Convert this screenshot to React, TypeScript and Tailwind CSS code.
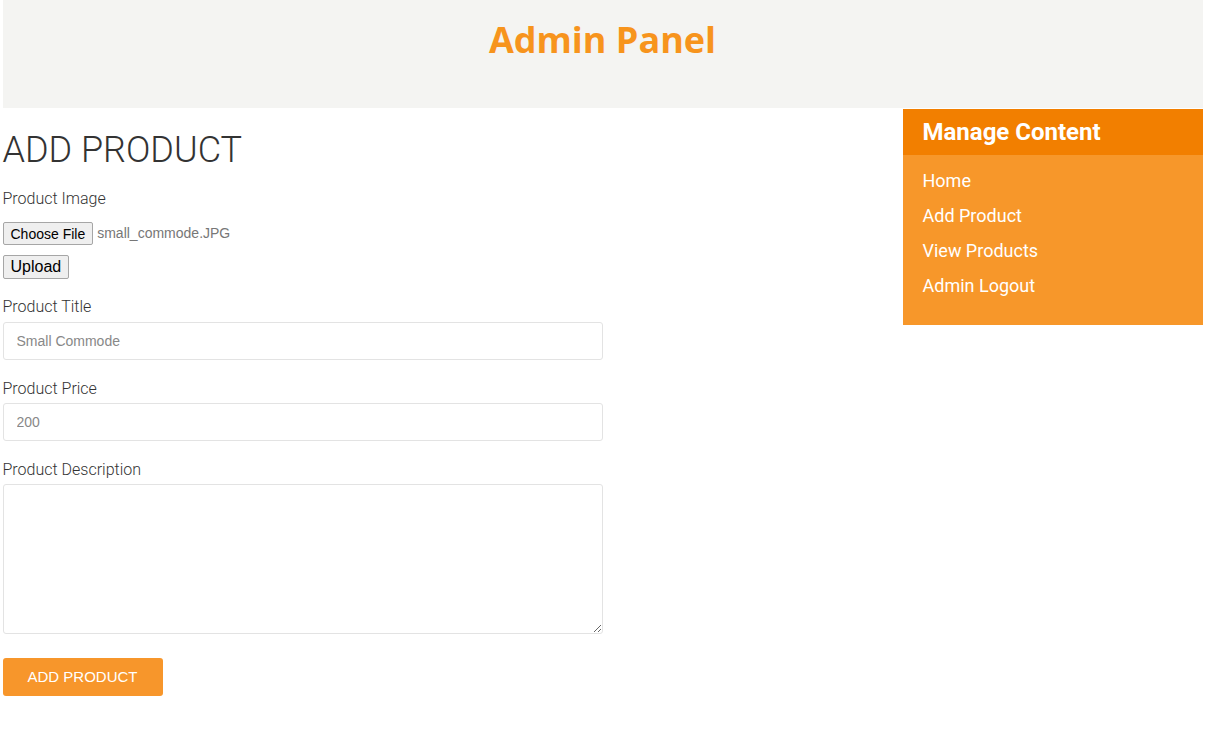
export default function App() {
  const links = ['Home', 'Add Product', 'View Products', 'Admin Logout'];

  return (
    <div className="min-h-screen bg-white">
      <div className="mx-auto w-[1200px]">
        <header className="h-[108px] bg-[#f4f4f2] pt-[13px] text-center">
          <h1 className="text-[36px] font-bold text-[#f7941d] [font-family:'Open_Sans',sans-serif]">
            Admin Panel
          </h1>
        </header>

        <div className="flex">
          <main className="w-[900px] pt-[20px] text-[#333] [font-family:Roboto,sans-serif]">
            <h2 className="text-[36px] font-light leading-[44px]">ADD PRODUCT</h2>

            <form className="mt-[16px] w-[600px]">
              <label className="block text-[16px] font-light leading-[22px]">Product Image</label>
              <div className="mt-[12px] flex items-center gap-[4px] [font-family:Arial,'Liberation_Sans',sans-serif]">
                <button type="button" className="h-[23px] rounded-[2px] border border-[#a6a6a6] bg-[#efefef] px-[7px] text-[14px] leading-[18px] text-black">
                  Choose File
                </button>
                <span className="text-[14px] text-[#777]">small_commode.JPG</span>
              </div>
              <button type="button" className="mt-[10px] h-[24px] rounded-[2px] border border-[#a6a6a6] bg-[#efefef] px-[7px] text-[16px] leading-[20px] text-black [font-family:Arial,'Liberation_Sans',sans-serif]">
                Upload
              </button>

              <label className="mt-[17px] block text-[16px] font-light leading-[22px]">Product Title</label>
              <input
                className="mt-[4px] h-[38px] w-full rounded-[3px] border border-[#e3e3e3] px-[13px] text-[14px] placeholder:text-[#888] [font-family:Arial,'Liberation_Sans',sans-serif]"
                placeholder="Small Commode"
              />

              <label className="mt-[18px] block text-[16px] font-light leading-[22px]">Product Price</label>
              <input
                className="mt-[3px] h-[38px] w-full rounded-[3px] border border-[#e3e3e3] px-[13px] text-[14px] placeholder:text-[#888] [font-family:Arial,'Liberation_Sans',sans-serif]"
                placeholder="200"
              />

              <label className="mt-[18px] block text-[16px] font-light leading-[22px]">Product Description</label>
              <textarea className="mt-[3px] block h-[150px] w-full rounded-[3px] border border-[#e3e3e3] px-[13px] py-[8px] text-[14px]" />

              <button type="button" className="mt-[24px] h-[38px] w-[160px] rounded-[3px] bg-[#f7962b] text-[15px] text-white [font-family:Arial,'Liberation_Sans',sans-serif]">
                ADD PRODUCT
              </button>
            </form>
          </main>

          <aside className="mt-[1px] w-[300px] self-start bg-[#f7972a] pb-[22px] text-white [font-family:Roboto,sans-serif]">
            <div className="h-[46px] bg-[#f27f00] px-[20px] text-[24px] font-bold leading-[46px]">
              Manage Content
            </div>
            <ul className="mt-[8px]">
              {links.map(l => (
                <li key={l} className="px-[20px] text-[18px] leading-[35px]">
                  <a href="#">{l}</a>
                </li>
              ))}
            </ul>
          </aside>
        </div>
      </div>
    </div>
  );
}
